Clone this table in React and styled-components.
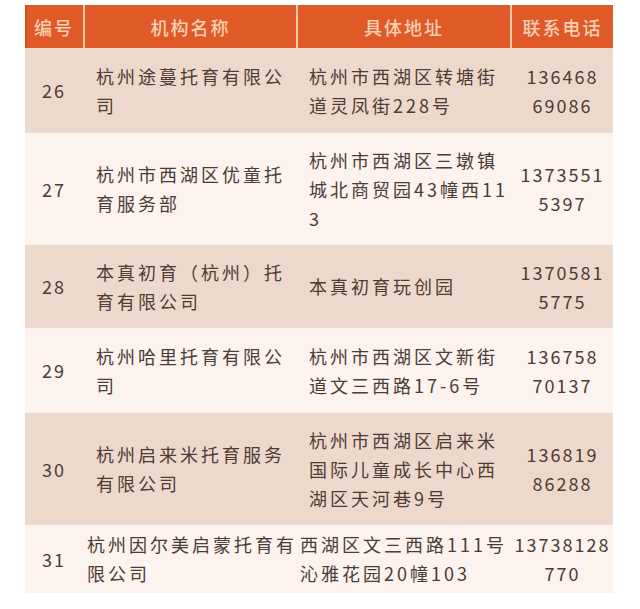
import React from "react";
import styled, { createGlobalStyle } from "styled-components";

const Global = createGlobalStyle`
  html, body { margin: 0; padding: 0; background: #ffffff; }
  body { font-family: "Noto Sans CJK SC", "Noto Sans", sans-serif; }
`;

const Page = styled.div`
  width: 640px;
  height: 609px;
  padding: 5px 0 0 25px;
  box-sizing: border-box;
  background: #ffffff;
`;

const Table = styled.div`
  width: 588px;
  display: flex;
  flex-direction: column;
`;

const cols = "58px 211px 212px 101px";

const HeadRow = styled.div`
  display: grid;
  grid-template-columns: ${cols};
  column-gap: 2px;
  height: 43px;
  background: #f6c8ab;
`;

const HeadCell = styled.div`
  background: #e05a28;
  color: #f9d0b3;
  font-size: 18px;
  letter-spacing: 2px;
  font-weight: 500;
  display: flex;
  align-items: center;
  justify-content: center;
  &:first-child { box-shadow: inset 2px 0 0 #cf4d1e; }
`;

const Row = styled.div`
  display: grid;
  grid-template-columns: ${cols};
  column-gap: 2px;
  height: ${(p) => p.$h}px;
  background: ${(p) => (p.$dark ? "#edd9cb" : "#fcf2ee")};
  color: #4b3c35;
  font-size: 18px;
`;

const Cell = styled.div`
  display: flex;
  flex-direction: column;
  justify-content: center;
  align-items: ${(p) => (p.$center ? "center" : "flex-start")};
  padding: 0 ${(p) => (p.$center ? 0 : p.$tight ? 2 : 11)}px;
  line-height: 29px;
  letter-spacing: ${(p) => (p.$digits ? 2 : 3)}px;
  white-space: nowrap;
  overflow: hidden;
`;

const Line = styled.span`
  display: block;
`;

const rows = [
  { no: "26", h: 85, dark: true, name: ["杭州途蔓托育有限公", "司"], addr: ["杭州市西湖区转塘街", "道灵凤街228号"], tel: ["136468", "69086"] },
  { no: "27", h: 112, dark: false, name: ["杭州市西湖区优童托", "育服务部"], addr: ["杭州市西湖区三墩镇", "城北商贸园43幢西11", "3"], tel: ["1373551", "5397"] },
  { no: "28", h: 83, dark: true, name: ["本真初育（杭州）托", "育有限公司"], addr: ["本真初育玩创园"], tel: ["1370581", "5775"] },
  { no: "29", h: 85, dark: false, name: ["杭州哈里托育有限公", "司"], addr: ["杭州市西湖区文新街", "道文三西路17-6号"], tel: ["136758", "70137"] },
  { no: "30", h: 112, dark: true, name: ["杭州启来米托育服务", "有限公司"], addr: ["杭州市西湖区启来米", "国际儿童成长中心西", "湖区天河巷9号"], tel: ["136819", "86288"] },
  { no: "31", h: 68, dark: false, tight: true, name: ["杭州因尔美启蒙托育有", "限公司"], addr: ["西湖区文三西路111号", "沁雅花园20幢103"], tel: ["13738128", "770"] },
];

const Lines = ({ items }) => items.map((t, i) => <Line key={i}>{t}</Line>);

export default function App() {
  return (
    <>
      <Global />
      <Page>
        <Table>
          <HeadRow>
            <HeadCell>编号</HeadCell>
            <HeadCell>机构名称</HeadCell>
            <HeadCell>具体地址</HeadCell>
            <HeadCell>联系电话</HeadCell>
          </HeadRow>
          {rows.map((r) => (
            <Row key={r.no} $h={r.h} $dark={r.dark}>
              <Cell $center $digits>{r.no}</Cell>
              <Cell $tight={r.tight}><Lines items={r.name} /></Cell>
              <Cell $tight={r.tight}><Lines items={r.addr} /></Cell>
              <Cell $center $digits><Lines items={r.tel} /></Cell>
            </Row>
          ))}
        </Table>
      </Page>
    </>
  );
}
